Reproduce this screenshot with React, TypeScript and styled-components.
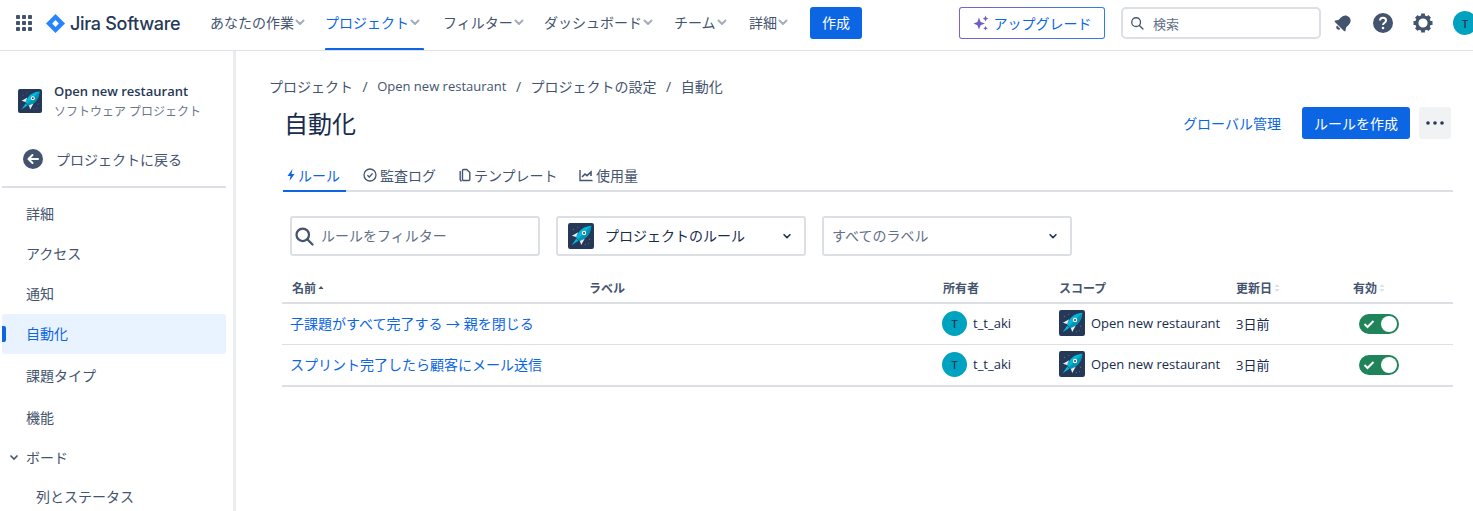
import styled, { createGlobalStyle } from "styled-components";

const Global = createGlobalStyle`
  html, body { margin: 0; padding: 0; height: 100%; overflow: hidden; background: #fff; }
  body { font-family: "Open Sans", "Noto Sans CJK JP", sans-serif; font-size: 14px; color: #172b4d; }
  * { box-sizing: border-box; }
`;

const Page = styled.div`
  height: 511px;
  width: 1473px;
  overflow: hidden;
  display: flex;
  flex-direction: column;
`;

const Header = styled.header`
  height: 51px;
  flex: none;
  display: flex;
  align-items: center;
  border-bottom: 1px solid #dfe1e6;
  padding: 0 0 4px 16px;
  overflow: hidden;
  & > * {
    flex: none;
  }
`;

const Brand = styled.div`
  display: flex;
  align-items: center;
  margin-left: 14px;
  margin-right: 12px;
  gap: 5px;
  font-size: 18px;
  font-weight: 500;
  font-family: "Inter", "Open Sans", sans-serif;
  letter-spacing: -0.3px;
  color: #253858;
  width: 152px;
`;

const NavItem = styled.div<{ $active?: boolean; $w: number; $after?: number }>`
  height: 46px;
  width: ${(p) => p.$w}px;
  margin-right: ${(p) => p.$after ?? 0}px;
  padding: 0 0 2px;
  display: flex;
  align-items: center;
  position: relative;
  font-size: 14px;
  color: ${(p) => (p.$active ? "#0c66e4" : "#44546f")};
  white-space: nowrap;
  &::after {
    content: "";
    display: ${(p) => (p.$active ? "block" : "none")};
    position: absolute;
    left: 0;
    right: 0;
    bottom: -4px;
    height: 2px;
    background: #0c66e4;
    border-radius: 1px 1px 0 0;
  }
`;

const CreateBtn = styled.button`
  height: 32px;
  width: 52px;
  border: 0;
  border-radius: 3px;
  background: #0c66e4;
  color: #fff;
  font: inherit;
  font-size: 14px;
  padding: 0 0 2px;
`;

const UpgradeBtn = styled.button`
  height: 32px;
  width: 146px;
  margin-left: 97px;
  border: 1px solid transparent;
  border-radius: 3px;
  background: linear-gradient(#fff, #fff) padding-box, linear-gradient(90deg, #7f5fd0, #2f7de8) border-box;
  color: #0c66e4;
  font: inherit;
  font-size: 14px;
  display: flex;
  align-items: center;
  justify-content: center;
  gap: 5px;
  padding: 0;
`;

const SearchBox = styled.div`
  width: 200px;
  height: 32px;
  margin-left: 16px;
  border: 2px solid #dcdfe4;
  border-radius: 5px;
  display: flex;
  align-items: center;
  padding-left: 7px;
  gap: 9px;
  color: #626f86;
  font-size: 13px;
`;

const HeaderIcons = styled.div`
  display: flex;
  align-items: center;
  gap: 16px;
  margin-left: 10px;
`;

const Avatar = styled.div<{ $size: number }>`
  width: ${(p) => p.$size}px;
  height: ${(p) => p.$size}px;
  flex: none;
  border-radius: 50%;
  background: #00a3bf;
  color: #253858;
  font-size: 11px;
  font-weight: 600;
  display: flex;
  align-items: center;
  justify-content: center;
`;

const HeaderAvatar = styled(Avatar)`
  margin-left: 2px;
`;

const Body = styled.div`
  flex: 1;
  display: flex;
  min-height: 0;
`;

const Sidebar = styled.aside`
  width: 236px;
  flex: none;
  border-right: 3px solid #ebecf0;
  padding: 38px 7px 0 2px;
  overflow: hidden;
`;

const ProjectHead = styled.div`
  display: flex;
  align-items: center;
  gap: 12px;
  padding-left: 16px;
  height: 24px;
`;

const ProjectText = styled.div`
  display: flex;
  flex-direction: column;
  gap: 3px;
  margin-top: 1px;
  line-height: 18px;
`;

const ProjectName = styled.div`
  font-size: 13px;
  font-weight: 600;
  color: #253858;
`;

const ProjectSub = styled.div`
  font-size: 12px;
  color: #6b778c;
`;

const BackRow = styled.div`
  display: flex;
  align-items: center;
  gap: 13px;
  height: 40px;
  margin-top: 26px;
  padding-left: 21px;
  color: #44546f;
  font-size: 14px;
`;

const SideDivider = styled.div`
  height: 2px;
  background: #dcdfe4;
  margin-top: 7px;
  margin-bottom: 6px;
`;

const SideItem = styled.div<{ $active?: boolean; $h?: number; $indent?: number; $lift?: boolean }>`
  height: ${(p) => p.$h ?? 40}px;
  display: flex;
  align-items: center;
  padding-left: ${(p) => p.$indent ?? 24}px;
  padding-bottom: ${(p) => (p.$lift ? 2 : 0)}px;
  font-size: 14px;
  color: ${(p) => (p.$active ? "#0c66e4" : "#44546f")};
  background: ${(p) => (p.$active ? "#e9f2ff" : "transparent")};
  border-radius: 3px;
  position: relative;
  gap: 6px;
  white-space: nowrap;
  &::before {
    content: "";
    display: ${(p) => (p.$active ? "block" : "none")};
    position: absolute;
    left: 0;
    top: 12px;
    height: 16px;
    width: 4px;
    background: #0c66e4;
    border-radius: 0 2px 2px 0;
  }
`;

const Main = styled.main`
  flex: 1;
  min-width: 0;
  padding: 23px 20px 0 46px;
`;

const Crumbs = styled.nav`
  display: flex;
  align-items: center;
  height: 24px;
  margin-left: -13px;
  color: #44546f;
  font-size: 14px;
  white-space: nowrap;
`;

const CrumbLatin = styled.span`
  font-size: 13px;
`;

const CrumbSep = styled.span`
  margin: 0 9.5px;
`;

const TitleRow = styled.div`
  display: flex;
  align-items: center;
  height: 40px;
  margin: 5px 2px 0 0;
  padding-left: 2px;
`;

const Title = styled.h1`
  margin: 0;
  padding-bottom: 2px;
  font-size: 24px;
  font-weight: 400;
  color: #172b4d;
  flex: 1;
`;

const TextLink = styled.span`
  color: #0c66e4;
  font-size: 14px;
  margin-right: 21px;
`;

const PrimaryBtn = styled.button`
  height: 32px;
  width: 108px;
  border: 0;
  border-radius: 3px;
  background: #0c66e4;
  color: #fff;
  font: inherit;
  font-size: 14px;
  padding: 0;
`;

const MoreBtn = styled.button`
  height: 32px;
  width: 32px;
  margin-left: 9px;
  border: 0;
  border-radius: 3px;
  background: #f1f2f4;
  display: flex;
  align-items: center;
  justify-content: center;
  padding: 0;
`;

const Tabs = styled.div`
  display: flex;
  margin-top: 19px;
  margin-left: 1px;
  height: 30px;
  border-bottom: 2px solid #dcdfe4;
`;

const Tab = styled.div<{ $active?: boolean; $w: number; $pad?: number; $gap?: number }>`
  width: ${(p) => p.$w}px;
  height: 30px;
  display: flex;
  align-items: center;
  gap: ${(p) => p.$gap ?? 3}px;
  padding: 0 0 3px ${(p) => p.$pad ?? 2}px;
  font-size: 14px;
  color: ${(p) => (p.$active ? "#0c66e4" : "#44546f")};
  border-bottom: 2px solid ${(p) => (p.$active ? "#0c66e4" : "transparent")};
  white-space: nowrap;
`;

const Filters = styled.div`
  display: flex;
  gap: 16px;
  margin-top: 24px;
  margin-left: 8px;
`;

const FilterBox = styled.div<{ $pl: number; $gap: number }>`
  width: 250px;
  height: 40px;
  border: 2px solid #dcdfe4;
  border-radius: 3px;
  display: flex;
  align-items: center;
  padding: 0 12px 0 ${(p) => p.$pl}px;
  font-size: 14px;
  color: #172b4d;
  white-space: nowrap;
  gap: ${(p) => p.$gap}px;
`;

const Hint = styled.span`
  color: #626f86;
  flex: 1;
  padding-bottom: 2px;
`;

const Grow = styled.span`
  flex: 1;
  padding-bottom: 2px;
`;

const Table = styled.div`
  margin-top: 20px;
`;

const columns = "297px 354px 116px 177px 117px 1fr";

const HeadRow = styled.div`
  display: grid;
  grid-template-columns: ${columns};
  height: 28px;
  align-items: center;
  padding: 0 0 2px 10px;
  border-bottom: 2px solid #dcdfe4;
  font-size: 12px;
  font-weight: 600;
  color: #44546f;
`;

const HeadCell = styled.div`
  display: flex;
  align-items: center;
  gap: 2px;
`;

const Row = styled.div<{ $last?: boolean }>`
  display: grid;
  grid-template-columns: ${columns};
  height: ${(p) => (p.$last ? 42 : 41)}px;
  align-items: center;
  padding-left: 8px;
  border-bottom: ${(p) => (p.$last ? 2 : 1)}px solid #dcdfe4;
  font-size: 13px;
  color: #172b4d;
`;

const RuleLink = styled.div`
  color: #0c66e4;
  font-size: 14px;
  padding-bottom: 2px;
  white-space: nowrap;
`;

const Cell = styled.div<{ $shift?: number }>`
  display: flex;
  align-items: center;
  gap: 6px;
  padding-bottom: 2px;
  white-space: nowrap;
  margin-left: ${(p) => p.$shift ?? 0}px;
`;

const Toggle = styled.div`
  width: 40px;
  height: 20px;
  border-radius: 10px;
  background: #1f845a;
  position: relative;
  margin-left: 8px;
  display: flex;
  align-items: center;
  padding-left: 4px;
  &::after {
    content: "";
    position: absolute;
    right: 2px;
    top: 2px;
    width: 16px;
    height: 16px;
    border-radius: 50%;
    background: #fff;
  }
`;

const Rocket = ({ size }: { size: number }) => (
  <svg width={size} height={size} viewBox="0 0 24 24" style={{ flex: "none" }}>
    <rect width="24" height="24" rx="2" fill="#253858" />
    <g fill="#5e6c84">
      <circle cx="5" cy="6" r="0.6" />
      <circle cx="9" cy="4" r="0.5" />
      <circle cx="20" cy="15" r="0.6" />
      <circle cx="16" cy="20" r="0.6" />
      <circle cx="19" cy="19" r="0.5" />
    </g>
    <path d="M21.5 2.5c-5 .3-9.4 2.6-11.8 6.4L7 13l4 4 4.2-2.6c3.8-2.4 6-7 6.3-11.9z" fill="#00b8d9" />
    <path d="M21.5 2.5c-.3 4.9-2.5 9.5-6.3 11.9L11 17l-2-2z" fill="#0095b3" />
    <path d="M9.4 8.6 3.6 11.8 7.4 13zM15.4 14.6 12.2 20.4 11 16.6z" fill="#ebecf0" />
    <path d="M7.6 14.4 9.6 16.4 3.4 20.6z" fill="#00b8d9" />
    <circle cx="14.8" cy="9.2" r="2" fill="#fff" />
    <circle cx="14.8" cy="9.2" r="0.9" fill="#253858" />
  </svg>
);

const Chevron = ({ color = "#a5adba", size = 12 }: { color?: string; size?: number }) => (
  <svg width={size} height={size} viewBox="0 0 12 12" style={{ flex: "none" }}>
    <path d="M2.5 4.5 6 8l3.5-3.5" fill="none" stroke={color} strokeWidth="2" strokeLinecap="round" strokeLinejoin="round" />
  </svg>
);

const SearchIcon = ({ size, width }: { size: number; width: number }) => (
  <svg width={size} height={size} viewBox="0 0 16 16" style={{ flex: "none" }}>
    <circle cx="7" cy="7" r="5" fill="none" stroke="#44546f" strokeWidth={width} />
    <path d="m10.8 10.8 4 4" stroke="#44546f" strokeWidth={width} strokeLinecap="round" />
  </svg>
);

const Sort = () => (
  <svg width="6" height="10" viewBox="0 0 6 10">
    <path d="M3 1 5.5 4h-5zM3 9 .5 6h5z" fill="#dfe1e6" />
  </svg>
);

const AppGrid = () => (
  <svg width="16" height="16" viewBox="0 0 16 16" style={{ flex: "none" }}>
    {[0, 6, 12].flatMap((y) =>
      [0, 6, 12].map((x) => <rect key={`${x}-${y}`} x={x} y={y} width="4" height="4" rx="0.8" fill="#44546f" />)
    )}
  </svg>
);

const JiraMark = () => (
  <svg width="19" height="19" viewBox="0 0 18 18" style={{ flex: "none" }}>
    <path d="M9 0 18 9 9 18 0 9z" fill="#2684ff" />
    <path d="M9 5.8 12.2 9 9 12.2 5.8 9z" fill="#fff" />
  </svg>
);

const Sparkle = () => (
  <svg width="16" height="16" viewBox="0 0 16 16" style={{ flex: "none" }}>
    <path d="M6 2.5 7.6 7 12 8.6 7.6 10.2 6 14.5 4.4 10.2 0.5 8.6 4.4 7z" fill="#6e5dc6" />
    <path d="M12.5 0.5 13.4 2.8 15.5 3.6 13.4 4.4 12.5 6.5 11.6 4.4 9.8 3.6 11.6 2.8zM12.5 11 13.2 12.6 14.8 13.2 13.2 13.9 12.5 15.5 11.8 13.9 10.2 13.2 11.8 12.6z" fill="#6e5dc6" />
  </svg>
);

const Bell = () => (
  <svg width="24" height="24" viewBox="0 0 24 24" style={{ flex: "none" }}>
    <g transform="rotate(45 12 12)" fill="#44546f">
      <path d="M12 3.500c-3.400 0-5.400 2.600-5.400 6v3.600L4.800 15.600c-.4.600 0 1.400.8 1.400h12.800c.8 0 1.200-.8.800-1.400l-1.800-2.500V9.500c0-3.400-2-6-5.400-6z" />
      <path d="M9.600 18h4.800c0 1.500-1 2.500-2.400 2.500S9.600 19.500 9.600 18z" />
    </g>
  </svg>
);

const Help = () => (
  <svg width="24" height="24" viewBox="0 0 24 24" style={{ flex: "none" }}>
    <circle cx="12" cy="12" r="10" fill="#44546f" />
    <path d="M9 9.600c0-1.800 1.300-2.800 3-2.800s3 1 3 2.600c0 2.400-3 2.200-3 4.600" fill="none" stroke="#fff" strokeWidth="2" />
    <circle cx="12" cy="17" r="1.300" fill="#fff" />
  </svg>
);

const Gear = () => (
  <svg width="24" height="24" viewBox="0 0 24 24" style={{ flex: "none" }}>
    <circle cx="12" cy="12" r="6.200" fill="none" stroke="#44546f" strokeWidth="3.200" />
    <g stroke="#44546f" strokeWidth="3.800" strokeLinecap="butt">
      <path d="M12 2.500v3M12 18.500v3M2.500 12h3M18.500 12h3M5.300 5.300l2.100 2.100M16.600 16.600l2.100 2.100M5.300 18.700l2.100-2.100M16.600 7.400l2.100-2.100" />
    </g>
  </svg>
);

const BackIcon = () => (
  <svg width="20" height="20" viewBox="0 0 20 20" style={{ flex: "none" }}>
    <circle cx="10" cy="10" r="10" fill="#44546f" />
    <path d="M15 10H6M9.500 6 5.500 10l4 4" fill="none" stroke="#fff" strokeWidth="2" strokeLinecap="round" strokeLinejoin="round" />
  </svg>
);

const Bolt = () => (
  <svg width="12" height="14" viewBox="0 0 12 14" style={{ flex: "none" }}>
    <path d="M7.500 1 2.500 8h3L4.500 13l5-7h-3z" fill="#0c66e4" />
  </svg>
);

const CheckCircle = () => (
  <svg width="14" height="14" viewBox="0 0 14 14" style={{ flex: "none" }}>
    <circle cx="7" cy="7" r="6" fill="none" stroke="#44546f" strokeWidth="1.300" />
    <path d="m4.400 7.200 1.900 1.800 3.300-3.600" fill="none" stroke="#44546f" strokeWidth="1.300" />
  </svg>
);

const Pages = () => (
  <svg width="14" height="14" viewBox="0 0 14 14" style={{ flex: "none" }}>
    <path d="M5.500 1.500h3.300l3 3v7a1 1 0 0 1-1 1H5.500a1 1 0 0 1-1-1v-9a1 1 0 0 1 1-1z" fill="none" stroke="#44546f" strokeWidth="1.400" strokeLinejoin="round" />
    <path d="M2.200 3v8.500a1.500 1.500 0 0 0 1.500 1.500" fill="none" stroke="#44546f" strokeWidth="1.400" />
  </svg>
);

const Usage = () => (
  <svg width="14" height="14" viewBox="0 0 14 14" style={{ flex: "none" }}>
    <path d="M1 2v10.500h12.500" fill="none" stroke="#44546f" strokeWidth="1.400" />
    <path d="m3 9 3-3 2 1.600L12 4v4" fill="none" stroke="#44546f" strokeWidth="1.600" />
  </svg>
);

const Dots = () => (
  <svg width="18" height="4" viewBox="0 0 18 4">
    <circle cx="2" cy="2" r="1.800" fill="#253858" />
    <circle cx="9" cy="2" r="1.800" fill="#253858" />
    <circle cx="16" cy="2" r="1.800" fill="#253858" />
  </svg>
);

const Check = () => (
  <svg width="12" height="10" viewBox="0 0 12 10">
    <path d="m1.500 5 3 3 6-6" fill="none" stroke="#fff" strokeWidth="2" />
  </svg>
);

const navItems = [
  { label: "あなたの作業", w: 115 },
  { label: "プロジェクト", w: 99, after: 19, active: true },
  { label: "フィルター", w: 101 },
  { label: "ダッシュボード", w: 130 },
  { label: "チーム", w: 75 },
  { label: "詳細", w: 61 },
];

const sideItems = [
  { label: "詳細", h: 40, lift: true },
  { label: "アクセス", h: 40, lift: true },
  { label: "通知", h: 40, lift: true },
  { label: "自動化", h: 40, lift: true, active: true },
  { label: "課題タイプ", h: 42 },
  { label: "機能", h: 42 },
];

const rules = ["子課題がすべて完了する → 親を閉じる", "スプリント完了したら顧客にメール送信"];

const App = () => {
  return (
    <Page>
      <Global />
      <Header>
        <AppGrid />
        <Brand>
          <JiraMark />
          Jira Software
        </Brand>
        {navItems.map((item) => (
          <NavItem key={item.label} $w={item.w} $after={item.after} $active={item.active}>
            {item.label}
            <Chevron />
          </NavItem>
        ))}
        <CreateBtn>作成</CreateBtn>
        <UpgradeBtn>
          <Sparkle />
          アップグレード
        </UpgradeBtn>
        <SearchBox>
          <SearchIcon size={14} width={1.5} />
          検索
        </SearchBox>
        <HeaderIcons>
          <Bell />
          <Help />
          <Gear />
          <HeaderAvatar $size={24}>T</HeaderAvatar>
        </HeaderIcons>
      </Header>
      <Body>
        <Sidebar>
          <ProjectHead>
            <Rocket size={24} />
            <ProjectText>
              <ProjectName>Open new restaurant</ProjectName>
              <ProjectSub>ソフトウェア プロジェクト</ProjectSub>
            </ProjectText>
          </ProjectHead>
          <BackRow>
            <BackIcon />
            プロジェクトに戻る
          </BackRow>
          <SideDivider />
          {sideItems.map((item) => (
            <SideItem key={item.label} $active={item.active} $h={item.h} $lift={item.lift}>
              {item.label}
            </SideItem>
          ))}
          <SideItem $h={38} $indent={6}>
            <svg width="12" height="12" viewBox="0 0 12 12" style={{ flex: "none" }}>
              <path d="M2.500 4.500 6 8l3.500-3.500" fill="none" stroke="#44546f" strokeWidth="1.600" />
            </svg>
            ボード
          </SideItem>
          <SideItem $h={40} $indent={34}>
            列とステータス
          </SideItem>
        </Sidebar>
        <Main>
          <Crumbs>
            プロジェクト
            <CrumbSep>/</CrumbSep>
            <CrumbLatin>Open new restaurant</CrumbLatin>
            <CrumbSep>/</CrumbSep>
            プロジェクトの設定
            <CrumbSep>/</CrumbSep>
            自動化
          </Crumbs>
          <TitleRow>
            <Title>自動化</Title>
            <TextLink>グローバル管理</TextLink>
            <PrimaryBtn>ルールを作成</PrimaryBtn>
            <MoreBtn>
              <Dots />
            </MoreBtn>
          </TitleRow>
          <Tabs>
            <Tab $active $w={63} $gap={1}>
              <Bolt />
              ルール
            </Tab>
            <Tab $w={110} $pad={17}>
              <CheckCircle />
              監査ログ
            </Tab>
            <Tab $w={121} $gap={2}>
              <Pages />
              テンプレート
            </Tab>
            <Tab $w={80}>
              <Usage />
              使用量
            </Tab>
          </Tabs>
          <Filters>
            <FilterBox $pl={2} $gap={7}>
              <SearchIcon size={20} width={1.8} />
              <Hint>ルールをフィルター</Hint>
            </FilterBox>
            <FilterBox $pl={10} $gap={11}>
              <Rocket size={26} />
              <Grow>プロジェクトのルール</Grow>
              <Chevron color="#253858" size={10} />
            </FilterBox>
            <FilterBox $pl={8} $gap={8}>
              <Hint>すべてのラベル</Hint>
              <Chevron color="#253858" size={10} />
            </FilterBox>
          </Filters>
          <Table>
            <HeadRow>
              <HeadCell>
                名前
                <svg width="6" height="6" viewBox="0 0 6 6">
                  <path d="M3 1 5.500 4h-5z" fill="#44546f" />
                </svg>
              </HeadCell>
              <HeadCell>ラベル</HeadCell>
              <HeadCell>所有者</HeadCell>
              <HeadCell>スコープ</HeadCell>
              <HeadCell>
                更新日
                <Sort />
              </HeadCell>
              <HeadCell>
                有効
                <Sort />
              </HeadCell>
            </HeadRow>
            {rules.map((rule, i) => (
              <Row key={rule} $last={i === rules.length - 1}>
                <RuleLink>{rule}</RuleLink>
                <div />
                <Cell $shift={1}>
                  <Avatar $size={25}>T</Avatar>
                  t_t_aki
                </Cell>
                <Cell $shift={2}>
                  <Rocket size={26} />
                  Open new restaurant
                </Cell>
                <Cell $shift={2}>3日前</Cell>
                <Toggle>
                  <Check />
                </Toggle>
              </Row>
            ))}
          </Table>
        </Main>
      </Body>
    </Page>
  );
};

export default App;
